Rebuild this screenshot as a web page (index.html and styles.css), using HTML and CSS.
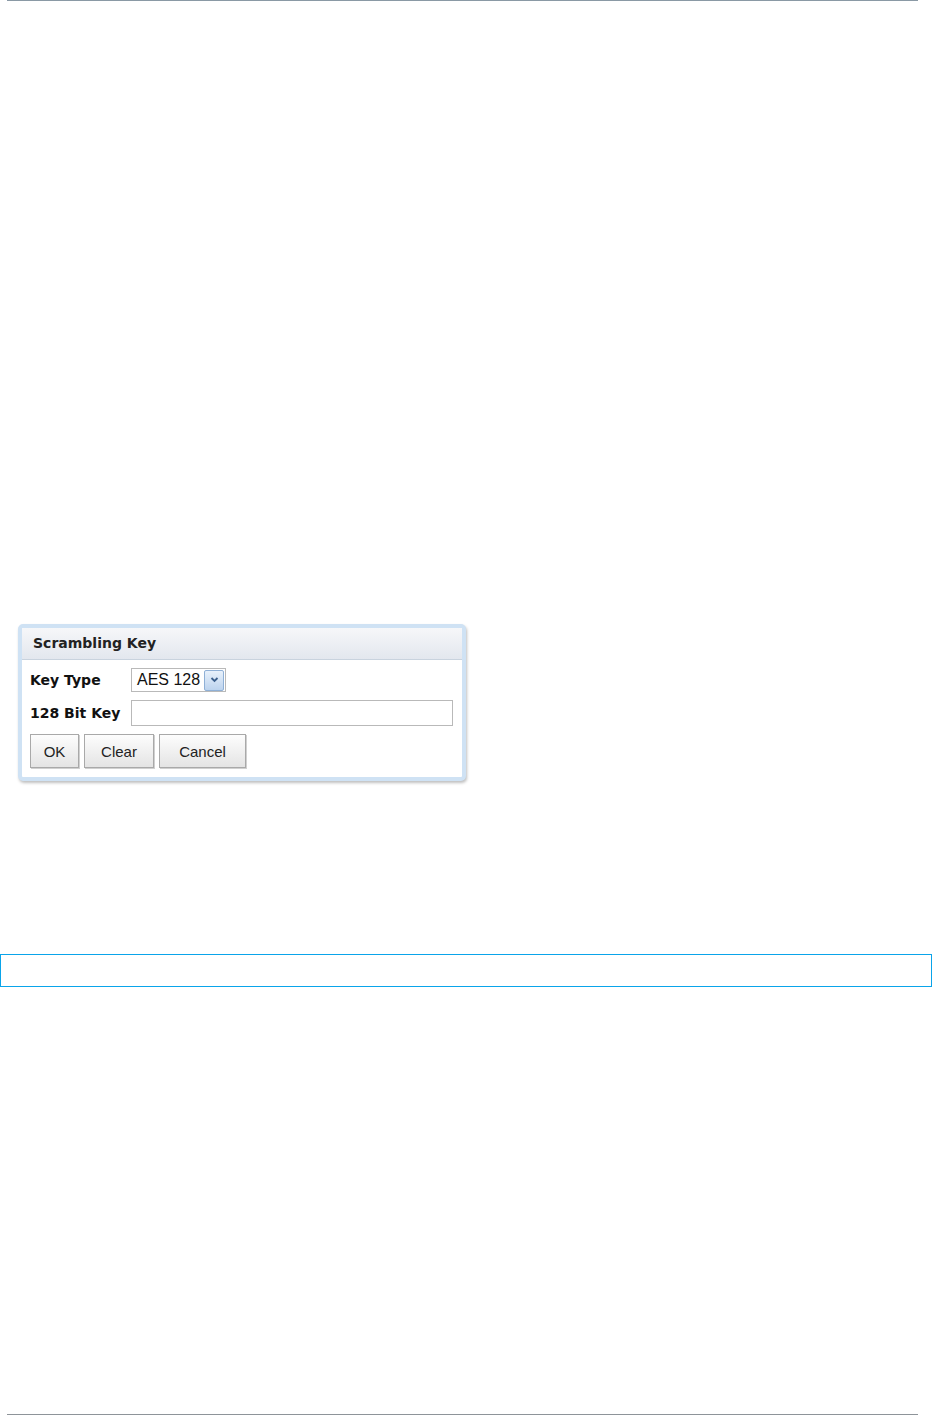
FILE: index.html
```html
<!DOCTYPE html>
<html lang="en">
<head>
<meta charset="UTF-8">
<meta name="viewport" content="width=device-width, initial-scale=1.0">
<title>Scrambling Key</title>
<link rel="stylesheet" href="styles.css">
</head>
<body>

<div class="top-rule"></div>

<div class="dialog">
    <div class="dialog-title">Scrambling Key</div>
    <div class="dialog-body">
        <div class="row">
            <label class="field-label">Key Type</label>
            <div class="fake-select">
                <span class="fake-select-text">AES 128</span>
                <span class="fake-select-btn">
                    <svg width="11" height="8" viewBox="0 0 11 8"><path d="M2.5 2 L5.5 5 L8.5 2" fill="none" stroke="#3b5f8c" stroke-width="1.8"/></svg>
                </span>
            </div>
        </div>
        <div class="row">
            <label class="field-label" for="bitKey">128 Bit Key</label>
            <input type="text" id="bitKey" class="key-input">
        </div>
        <div class="buttons">
            <button class="btn btn-ok">OK</button>
            <button class="btn btn-clear">Clear</button>
            <button class="btn btn-cancel">Cancel</button>
        </div>
    </div>
</div>

<div class="blue-box"></div>

<div class="bottom-rule"></div>

</body>
</html>
```

FILE: styles.css
```css
body {
    margin: 0;
    padding: 0;
    background-color: #fff;
    font-family: "Liberation Sans", Arial, sans-serif;
}
.top-rule {
    height: 1px;
    margin: 0 14px 0 7px;
    background-color: #8a99a5;
}
/* dialog frame */
.dialog {
    width: 440px;
    margin: 623px 0 0 18px;
    border: 4px solid #cfe2f4;
    border-radius: 5px;
    box-shadow: 1px 2px 3px rgba(0, 0, 0, 0.25);
    background-color: #fff;
}
.dialog-title {
    height: 31px;
    line-height: 31px;
    padding-left: 11px;
    font-family: "DejaVu Sans", Tahoma, sans-serif;
    font-weight: bold;
    font-size: 14px;
    color: #222;
    background: linear-gradient(#f6f7f9, #e3e7ee);
    border-bottom: 1px solid #c9d3de;
}
.dialog-body {
    padding: 8px 9px 9px 8px;
}
.row {
    display: flex;
    align-items: center;
    margin-bottom: 8px;
}
.field-label {
    width: 101px;
    font-family: "DejaVu Sans", Tahoma, sans-serif;
    font-weight: bold;
    font-size: 14px;
    color: #111;
}
.fake-select {
    display: flex;
    align-items: center;
    height: 22px;
    border: 1px solid #b9b9b9;
    padding-left: 5px;
}
.fake-select-text {
    font-size: 16px;
    color: #111;
    margin-right: 4px;
}
.fake-select-btn {
    display: flex;
    align-items: center;
    justify-content: center;
    width: 18px;
    height: 19px;
    margin-right: 1px;
    border: 1px solid #8fb0d6;
    border-radius: 2px;
    background: linear-gradient(#e8f1fb, #bcd3ee);
}
.key-input {
    flex: 1;
    height: 26px;
    padding: 0;
    border: 1px solid #b9b9b9;
    box-sizing: border-box;
}
.buttons {
    display: flex;
    gap: 5px;
}
.btn {
    height: 34px;
    border: 1px solid #a9a9a9;
    background: linear-gradient(#fdfdfd, #e4e4e4);
    font-family: "Liberation Sans", Arial, sans-serif;
    font-size: 15px;
    color: #222;
    padding: 0;
    box-shadow: 1px 1px 0 #d0d0d0;
}
.btn-ok { width: 49px; }
.btn-clear { width: 70px; }
.btn-cancel { width: 87px; }

.blue-box {
    height: 31px;
    margin-top: 173px;
    border: 1px solid #0aa4ea;
}
.bottom-rule {
    height: 1px;
    margin: 427px 14px 0 7px;
    background-color: #8e9499;
}
```
